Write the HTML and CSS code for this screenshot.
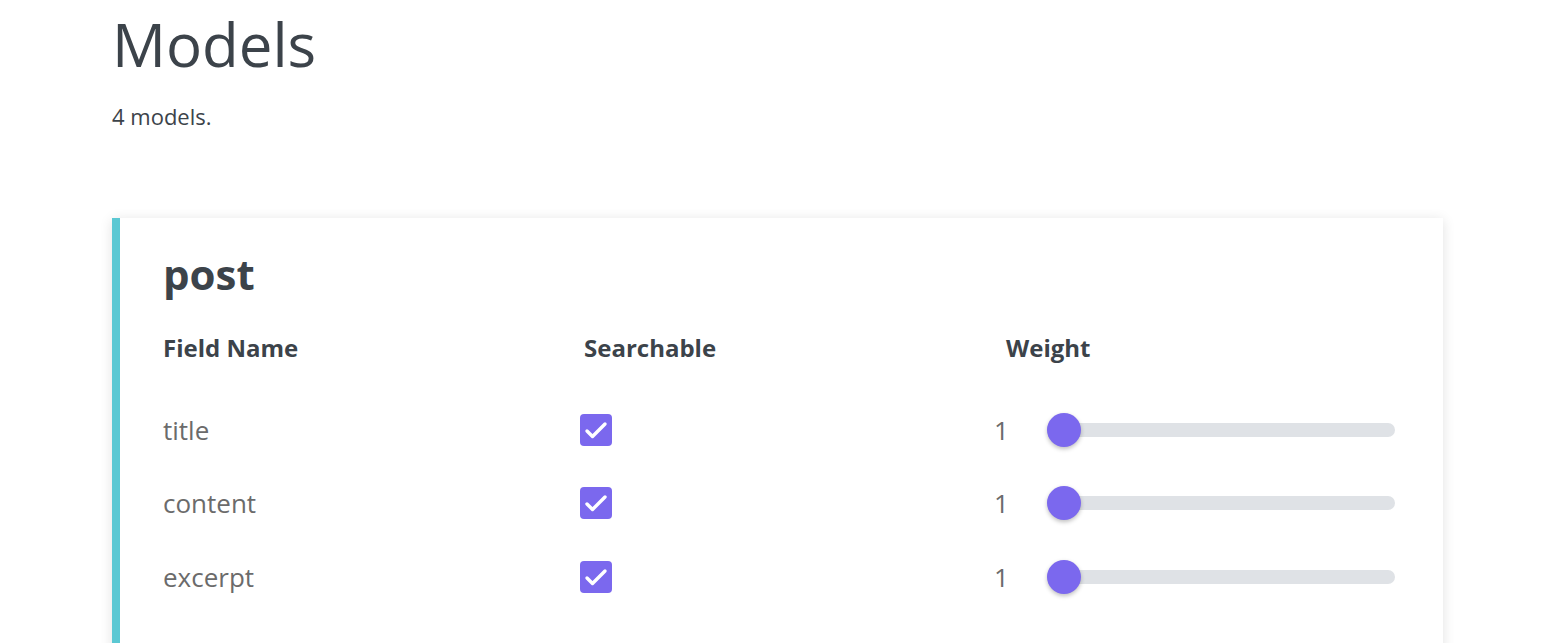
FILE: index.html
```html
<!DOCTYPE html>
<html>
<head>
<meta charset="utf-8">
<link rel="stylesheet" href="styles.css">
</head>
<body>
<main class="page">
  <h1 class="title">Models</h1>
  <p class="count">4 models.</p>
  <section class="card">
    <h2 class="card-title">post</h2>
    <div class="grid">
      <div class="head">Field Name</div>
      <div class="head">Searchable</div>
      <div class="head">Weight</div>

      <div class="cell name">title</div>
      <div class="cell"><span class="check"><svg viewBox="0 0 32 32" width="32" height="32"><path d="M7 17l5.5 5.5L25 10" fill="none" stroke="#fff" stroke-width="3.4" stroke-linecap="round" stroke-linejoin="round"/></svg></span></div>
      <div class="cell weight"><span class="val">1</span><span class="slider"><span class="thumb"></span></span></div>

      <div class="cell name">content</div>
      <div class="cell"><span class="check"><svg viewBox="0 0 32 32" width="32" height="32"><path d="M7 17l5.5 5.5L25 10" fill="none" stroke="#fff" stroke-width="3.4" stroke-linecap="round" stroke-linejoin="round"/></svg></span></div>
      <div class="cell weight"><span class="val">1</span><span class="slider"><span class="thumb"></span></span></div>

      <div class="cell name">excerpt</div>
      <div class="cell"><span class="check"><svg viewBox="0 0 32 32" width="32" height="32"><path d="M7 17l5.5 5.5L25 10" fill="none" stroke="#fff" stroke-width="3.4" stroke-linecap="round" stroke-linejoin="round"/></svg></span></div>
      <div class="cell weight"><span class="val">1</span><span class="slider"><span class="thumb"></span></span></div>
    </div>
  </section>
</main>
</body>
</html>
```

FILE: styles.css
```css
html, body {
  margin: 0;
  padding: 0;
  background: #fff;
}
body {
  font-family: "Open Sans", "Liberation Sans", sans-serif;
  color: #3c434a;
}
.page {
  padding: 0 111px 0 112px;
}
.title {
  margin: 0;
  padding-top: 8px;
  font-size: 60px;
  font-weight: 400;
  line-height: 72px;
  color: #3c434a;
}
.count {
  margin: 22px 0 0;
  font-size: 22px;
  line-height: 28px;
  color: #3c434a;
}
.card {
  margin-top: 88px;
  background: #fff;
  border-left: 8px solid #5bc8d3;
  box-shadow: 0 2px 12px rgba(0,0,0,0.12);
  padding: 28px 16px 40px 43px;
}
.card-title {
  margin: 0;
  font-size: 42px;
  font-weight: 700;
  line-height: 56px;
  color: #3c434a;
}
.grid {
  display: grid;
  grid-template-columns: 421px 422px 1fr;
  margin-top: 30px;
}
.head {
  font-size: 24px;
  font-weight: 700;
  line-height: 32px;
  color: #3c434a;
  padding-bottom: 29px;
}
.cell {
  height: 73.5px;
  display: flex;
  align-items: center;
  font-size: 26px;
  color: #6b6b6b;
}
.check {
  display: block;
  width: 32px;
  height: 32px;
  margin-left: -4px;
  border-radius: 4px;
  background: #7b68ee;
}
.check svg {
  display: block;
}
.weight {
  margin-left: -12px;
}
.val {
  width: 53px;
  font-size: 26px;
  color: #6b6b6b;
}
.slider {
  position: relative;
  width: 348px;
  height: 14px;
  border-radius: 7px;
  background: #dfe2e6;
}
.thumb {
  position: absolute;
  left: 0;
  top: -10px;
  width: 34px;
  height: 34px;
  border-radius: 50%;
  background: #7b68ee;
  box-shadow: 0 2px 4px rgba(0,0,0,0.25);
}
```
